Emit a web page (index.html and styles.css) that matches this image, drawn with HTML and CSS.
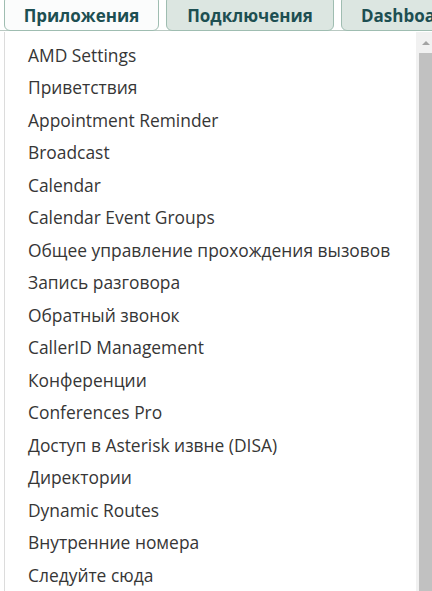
FILE: index.html
```html
<!DOCTYPE html>
<html lang="ru">
<head>
<meta charset="utf-8">
<link rel="stylesheet" href="styles.css">
</head>
<body>
<div class="page">
  <nav class="tabs">
    <div class="tab active">Приложения</div>
    <div class="tab">Подключения</div>
    <div class="tab">Dashboard</div>
  </nav>
  <div class="rule"></div>
  <div class="dropdown">
    <ul class="menu">
      <li>AMD Settings</li>
      <li>Приветствия</li>
      <li>Appointment Reminder</li>
      <li>Broadcast</li>
      <li>Calendar</li>
      <li>Calendar Event Groups</li>
      <li>Общее управление прохождения вызовов</li>
      <li>Запись разговора</li>
      <li>Обратный звонок</li>
      <li>CallerID Management</li>
      <li>Конференции</li>
      <li>Conferences Pro</li>
      <li>Доступ в Asterisk извне (DISA)</li>
      <li>Директории</li>
      <li>Dynamic Routes</li>
      <li>Внутренние номера</li>
      <li>Следуйте сюда</li>
    </ul>
    <div class="scrollbar">
      <div class="arrow"><span class="tri"></span></div>
      <div class="thumb"></div>
    </div>
  </div>
</div>
</body>
</html>
```
FILE: styles.css
```css
html, body {
  margin: 0;
  padding: 0;
  background: #fff;
  overflow: hidden;
}
.page {
  width: 432px;
  height: 591px;
  overflow: hidden;
  font-family: "Open Sans", "Liberation Sans", sans-serif;
}
.tabs {
  display: flex;
  gap: 7px;
  padding-left: 4px;
  margin-top: -5px;
  height: 36px;
  white-space: nowrap;
  overflow: hidden;
}
.tab {
  box-sizing: border-box;
  height: 36px;
  padding: 6px 0 0;
  border: 1px solid #9fbdb1;
  border-radius: 6px;
  background: #dce6e1;
  color: #1d4f52;
  font-weight: 700;
  font-size: 17px;
  line-height: 28px;
  text-align: center;
  flex: none;
}
.tab:nth-child(1) { width: 155px; background: #fbfcfc; }
.tab:nth-child(2) { width: 168px; }
.tab:nth-child(3) { width: 120px; padding-left: 19px; text-align: left; }
.rule {
  height: 1px;
  margin-top: -1px;
  background: #b9c9c2;
}
.dropdown {
  display: flex;
  margin-left: 4px;
  margin-top: 1px;
  height: 560px;
  border-left: 1px solid #dcdcdc;
}
.menu {
  list-style: none;
  margin: 0;
  padding: 6.5px 0 0 23px;
  flex: 1;
  background: #fff;
  color: #363636;
  font-size: 17.4px;
  line-height: 32.5px;
}
.menu li {
  white-space: nowrap;
}
.scrollbar {
  width: 16px;
  background: #f1f1f1;
  display: flex;
  flex-direction: column;
}
.arrow {
  height: 21px;
  display: flex;
  justify-content: center;
  align-items: center;
  padding-left: 3px;
}
.tri {
  width: 0;
  height: 0;
  border-left: 4px solid transparent;
  border-right: 4px solid transparent;
  border-bottom: 4px solid #a3a3a3;
}
.thumb {
  flex: 1;
  margin-left: 3px;
  background: #c1c1c1;
}
```
